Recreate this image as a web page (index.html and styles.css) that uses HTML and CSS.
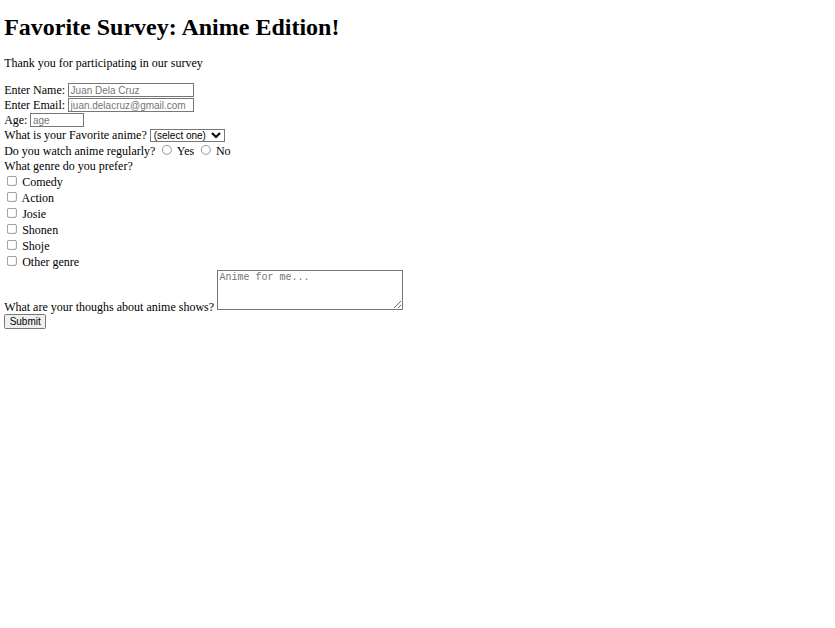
FILE: index.html
```html
<!DOCTYPE html>
<html>
<head>
<meta charset="utf-8">
<title>Favorite Survey</title>
<link rel="stylesheet" href="styles.css">
</head>
<body>
<div class="page">
<h1 class="title">Favorite Survey: Anime Edition!</h1>
<p class="intro">Thank you for participating in our survey</p>
<form class="survey">
<label>Enter Name: </label><input type="text" class="field" placeholder="Juan Dela Cruz"><br>
<label>Enter Email: </label><input type="email" class="field" placeholder="juan.delacruz@gmail.com"><br>
<label>Age: </label><input type="number" class="field age" placeholder="age"><br>
<label>What is your Favorite anime? </label><select class="pick"><option>(select one)</option><option>Naruto</option><option>One Piece</option></select><br>
<label>Do you watch anime regularly? </label><input type="radio" name="reg"> Yes <input type="radio" name="reg"> No<br>
<label>What genre do you prefer?</label><br>
<input type="checkbox"> Comedy<br>
<input type="checkbox"> Action<br>
<input type="checkbox"> Josie<br>
<input type="checkbox"> Shonen<br>
<input type="checkbox"> Shoje<br>
<input type="checkbox"> Other genre<br>
<label>What are your thoughs about anime shows? </label><textarea class="notes" placeholder="Anime for me..."></textarea><br>
<input type="submit" class="send" value="Submit">
</form>
</div>
</body>
</html>
```
FILE: styles.css
```css
html, body {
  margin: 0;
  padding: 0;
  background: #fff;
}
.page {
  zoom: 0.75;
  padding: 0 0 0 5.5px;
  font-family: "Liberation Serif", "Times New Roman", serif;
  font-size: 16px;
  color: #000;
}
.title {
  font-size: 32px;
  font-weight: bold;
  margin: 18px 0 20px;
}
.intro {
  margin: 0 0 16px;
}
.survey input, .survey select, .survey textarea {
  font-family: "Liberation Sans", Arial, sans-serif;
  font-size: 13.33px;
}
.field {
  width: 168px;
  box-sizing: border-box;
}
.age {
  width: 71px;
}
.pick {
  width: 100px;
}
.notes {
  font-family: "Liberation Mono", "Courier New", monospace !important;
  width: 248px;
  height: 54px;
  box-sizing: border-box;
}
```
